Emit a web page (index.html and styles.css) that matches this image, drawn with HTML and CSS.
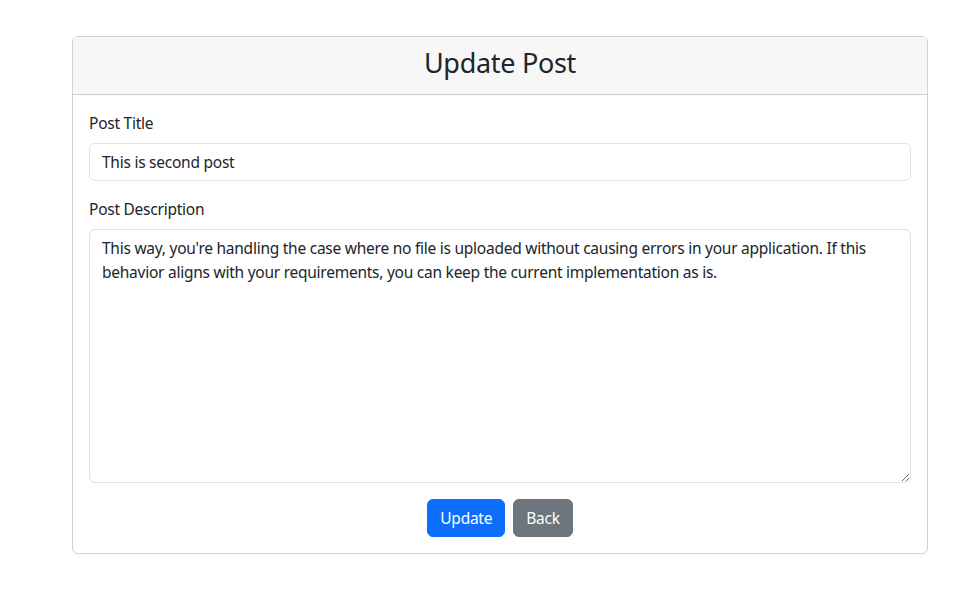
FILE: index.html
```html
<!DOCTYPE html>
<html lang="en">
<head>
<meta charset="utf-8">
<title>Update Post</title>
<link rel="stylesheet" href="styles.css">
</head>
<body>
<div class="page">
  <div class="card">
    <div class="card-header">
      <h3 class="title">Update Post</h3>
    </div>
    <div class="card-body">
      <div class="field">
        <label class="label" for="title">Post Title</label>
        <input class="control" id="title" type="text" value="This is second post">
      </div>
      <div class="field">
        <label class="label" for="desc">Post Description</label>
        <textarea class="control area" id="desc" rows="10">This way, you're handling the case where no file is uploaded without causing errors in your application. If this behavior aligns with your requirements, you can keep the current implementation as is.</textarea>
      </div>
      <div class="actions">
        <button class="btn btn-primary" type="button">Update</button>
        <button class="btn btn-secondary" type="button">Back</button>
      </div>
    </div>
  </div>
</div>
</body>
</html>
```
FILE: styles.css
```css
* { box-sizing: border-box; }
html, body { margin: 0; padding: 0; background: #fff; }
body {
  font-family: "Noto Sans", "Open Sans", sans-serif;
  font-size: 15.5px;
  line-height: 24px;
  color: #212529;
  letter-spacing: -0.25px;
}
.page {
  padding: 36px 46px 0 72px;
}
.card {
  width: 856px;
  border: 1px solid rgba(0,0,0,.175);
  border-radius: 6px;
  overflow: hidden;
}
.card-header {
  background: #f7f7f7;
  border-bottom: 1px solid rgba(0,0,0,.175);
  padding: 6px 16px 11px;
  text-align: center;
}
.title {
  margin: 0;
  font-weight: 400;
  font-size: 27px;
  line-height: 40px;
  letter-spacing: -0.3px;
}
.card-body {
  padding: 16px;
}
.field { margin-bottom: 16px; }
.label {
  display: block;
  margin-bottom: 8px;
  line-height: 24px;
}
.control {
  display: block;
  width: 100%;
  font: inherit;
  letter-spacing: inherit;
  color: #212529;
  padding: 6px 12px;
  border: 1px solid #dee2e6;
  border-radius: 6px;
  background: #fff;
  line-height: 24px;
  height: 38px;
}
.area {
  height: 254px;
  resize: vertical;
}
.actions {
  display: flex;
  justify-content: center;
  gap: 8px;
}
.btn {
  font: inherit;
  letter-spacing: inherit;
  line-height: 24px;
  padding: 6px 12px;
  border-radius: 6px;
  border: 1px solid transparent;
  color: #fff;
}
.btn-primary { background: #0d6efd; border-color: #0d6efd; }
.btn-secondary { background: #6c757d; border-color: #6c757d; }
```
